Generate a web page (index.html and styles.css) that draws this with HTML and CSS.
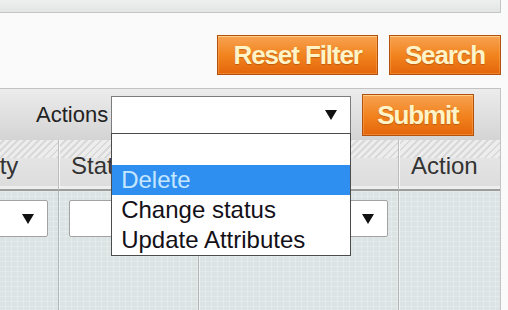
FILE: index.html
```html
<!DOCTYPE html>
<html>
<head>
<meta charset="utf-8">
<link rel="stylesheet" href="styles.css">
</head>
<body>
<div class="page">
  <div class="topband"></div>
  <div class="filters">
    <button class="btn">Reset Filter</button>
    <button class="btn">Search</button>
  </div>
  <div class="actionsbar">
    <span class="label">Actions</span>
    <div class="select main-select">
      <svg class="arrow" width="12" height="10" viewBox="0 0 12 10"><path d="M0 0H12L6 10Z" fill="#111"/></svg>
      <div class="droplist">
        <div class="opt blank"></div>
        <div class="opt sel">Delete</div>
        <div class="opt">Change status</div>
        <div class="opt">Update Attributes</div>
      </div>
    </div>
    <button class="btn submit">Submit</button>
  </div>
  <div class="tablewrap">
    <div class="grid">
      <div class="th">Qty</div>
      <div class="th">Status</div>
      <div class="th">Visibility</div>
      <div class="th">Action</div>
      <div class="td"><div class="select row-select"><svg class="arrow" width="12" height="10" viewBox="0 0 12 10"><path d="M0 0H12L6 10Z" fill="#111"/></svg></div></div>
      <div class="td"><div class="select row-select"><svg class="arrow" width="12" height="10" viewBox="0 0 12 10"><path d="M0 0H12L6 10Z" fill="#111"/></svg></div></div>
      <div class="td"><div class="select row-select"><svg class="arrow" width="12" height="10" viewBox="0 0 12 10"><path d="M0 0H12L6 10Z" fill="#111"/></svg></div></div>
      <div class="td"></div>
    </div>
  </div>
</div>
</body>
</html>
```

FILE: styles.css
```css
html, body {
  margin: 0;
  padding: 0;
  background: #fafafa;
  font-family: "Liberation Sans", Arial, sans-serif;
  overflow: hidden;
}
.page {
  width: 501px;
}
.topband {
  height: 12px;
  background: linear-gradient(#eef0f0, #e3e5e5);
  border-bottom: 1px solid #c4c6c6;
  border-right: 1px solid #c4c6c6;
}
.filters {
  display: flex;
  justify-content: flex-end;
  gap: 11px;
  padding: 22px 0 13px;
}
.btn {
  box-sizing: border-box;
  height: 40px;
  padding: 0 15px;
  border: 1px solid #b4500e;
  background: linear-gradient(#f7a252, #f2841f 50%, #e4650b);
  box-shadow: inset 0 1px 0 #ffcf88, inset 0 0 0 1px rgba(255, 190, 110, 0.35);
  color: #fff4c8;
  font-family: "Liberation Sans", Arial, sans-serif;
  font-weight: bold;
  font-size: 26px;
  letter-spacing: -1.1px;
  text-shadow: 0 1px 1px rgba(140, 60, 0, 0.45);
  line-height: 1;
  cursor: pointer;
}
.actionsbar {
  box-sizing: border-box;
  height: 52px;
  display: flex;
  align-items: center;
  padding-left: 36px;
  border-top: 1px solid #c2c2c2;
  border-right: 1px solid #c4c4c4;
  background: linear-gradient(#ececec, #d4d4d4);
  position: relative;
  z-index: 2;
}
.label {
  font-size: 22px;
  color: #222;
}
.select {
  box-sizing: border-box;
  position: relative;
  background: #fff;
}
.main-select {
  margin-left: 3px;
  width: 240px;
  height: 38px;
  border: 1px solid #7c7c7c;
}
.arrow {
  position: absolute;
  right: 13px;
  top: 50%;
  margin-top: -5px;
}
.droplist {
  box-sizing: border-box;
  position: absolute;
  top: 100%;
  left: -1px;
  width: 240px;
  background: #fff;
  border: 1px solid #4c4c4c;
  z-index: 5;
}
.opt {
  height: 30px;
  line-height: 30px;
  padding-left: 9px;
  font-size: 24px;
  color: #141018;
  white-space: nowrap;
}
.opt.blank {
  height: 31px;
}
.opt.sel {
  background: #2f8ff0;
  color: #c4e6ff;
}
.submit {
  margin-left: 11px;
  height: 42px;
  padding: 0 14px;
}
.tablewrap {
  overflow: hidden;
  border-right: 1px solid #c4c4c4;
}
.grid {
  display: grid;
  grid-template-columns: 90px 140px 200px 102px;
  grid-template-rows: 51px 130px;
  margin-left: -31px;
}
.th {
  box-sizing: border-box;
  display: flex;
  align-items: center;
  padding-left: 12px;
  padding-top: 2px;
  font-size: 24px;
  color: #333;
  border-right: 1px solid #bdbdbd;
  border-bottom: 2px solid #9c9c9c;
  box-shadow: inset 1px 0 0 #f6f6f6, inset 0 -3px 0 #eeeeee;
  background:
    repeating-linear-gradient(-45deg, #d9d9d9 0 2px, #ededed 2px 5px) top / 100% 18px no-repeat,
    linear-gradient(#e9e9e9, #dcdcdc);
  white-space: nowrap;
  overflow: hidden;
}
.td {
  box-sizing: border-box;
  padding: 9px 10px;
  border-right: 1px solid #b2b8b8;
  box-shadow: inset 1px 0 0 #eef2f2;
  background-color: #dce3e4;
  background-image:
    linear-gradient(90deg, rgba(255, 255, 255, 0.22) 1px, transparent 1px),
    linear-gradient(rgba(255, 255, 255, 0.22) 1px, transparent 1px);
  background-size: 6px 5px;
}
.row-select {
  width: 100%;
  height: 37px;
  border: 1px solid #a2a2a2;
  border-radius: 2px;
}
```
